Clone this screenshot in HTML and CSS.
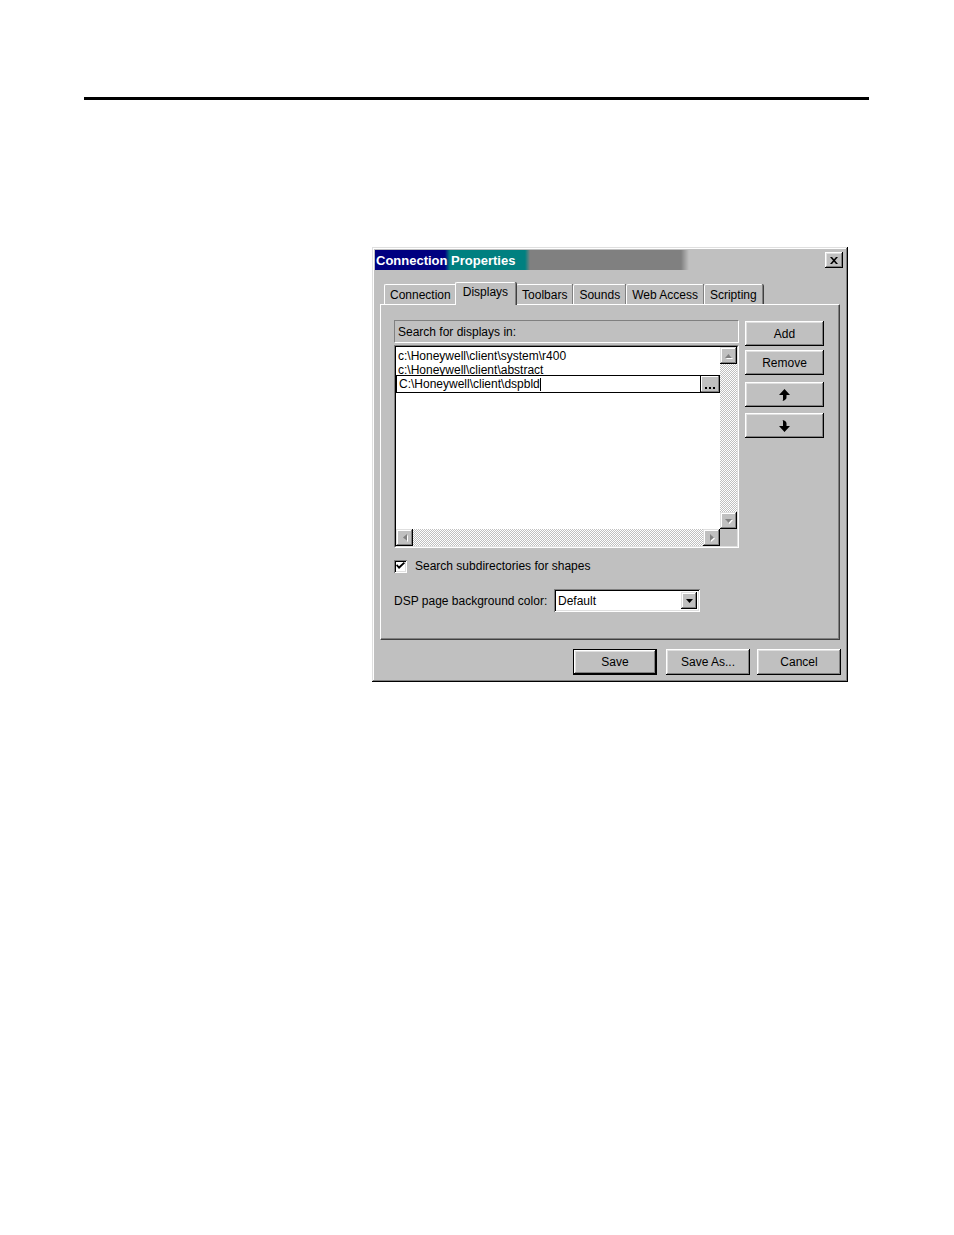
FILE: index.html
```html
<!DOCTYPE html>
<html>
<head>
<meta charset="utf-8">
<link rel="stylesheet" href="styles.css">
</head>
<body>
<div class="rule"></div>
<div class="dialog">
  <div class="titlebar">
    <span class="title">Connection Properties</span>
    <button class="close"><svg width="8" height="7" viewBox="0 0 8 7"><path d="M0 0h2l2 2.3L6 0h2L5 3.5 8 7H6L4 4.7 2 7H0l3-3.5z" fill="#000"/></svg></button>
  </div>
  <div class="tabs">
    <div class="tab">Connection</div>
    <div class="tab active">Displays</div>
    <div class="tab">Toolbars</div>
    <div class="tab">Sounds</div>
    <div class="tab">Web Access</div>
    <div class="tab">Scripting</div>
  </div>
  <div class="panel">
    <div class="dirs">
      <div class="listcol">
        <div class="listhead">Search for displays in:</div>
        <div class="listbox">
          <div class="listinner">
            <div class="listmain">
              <div class="items">
                <div class="item">c:\Honeywell\client\system\r400</div>
                <div class="item">c:\Honeywell\client\abstract</div>
                <div class="edit">
                  <span class="edittext">C:\Honeywell\client\dspbld<span class="caret"></span></span>
                  <button class="browse"><svg width="11" height="3" viewBox="0 0 11 3"><rect x="0" y="0" width="2" height="2" fill="#000"/><rect x="4" y="0" width="2" height="2" fill="#000"/><rect x="8" y="0" width="2" height="2" fill="#000"/></svg></button>
                </div>
              </div>
              <div class="vscroll">
                <div class="sbtn"><svg width="7" height="4" viewBox="0 0 7 4"><path d="M3.5 0L7 4H0z" fill="#808080"/></svg></div>
                <div class="track"></div>
                <div class="sbtn"><svg width="7" height="4" viewBox="0 0 7 4"><path d="M0 0h7L3.5 4z" fill="#808080"/></svg></div>
              </div>
            </div>
            <div class="hrow">
              <div class="hscroll">
                <div class="sbtn"><svg width="4" height="7" viewBox="0 0 4 7"><path d="M0 3.5L4 0v7z" fill="#808080"/></svg></div>
                <div class="track"></div>
                <div class="sbtn"><svg width="4" height="7" viewBox="0 0 4 7"><path d="M0 0l4 3.5L0 7z" fill="#808080"/></svg></div>
              </div>
              <div class="corner"></div>
            </div>
          </div>
        </div>
      </div>
      <div class="sidebtns">
        <button class="btn add">Add</button>
        <button class="btn remove">Remove</button>
        <button class="btn up"><svg width="11" height="12" viewBox="0 0 11 12"><path d="M5.5 0L11 6H7.5V8.5C7.5 10.2 6 11.3 3.5 12 4.3 10.8 4 9.8 4 8.5V6H0z" fill="#000"/></svg></button>
        <button class="btn down"><svg width="11" height="12" viewBox="0 0 11 12"><path d="M5.5 12L11 6H7.5V3.5C7.5 1.8 6 0.7 3.5 0 4.3 1.2 4 2.2 4 3.5V6H0z" fill="#000"/></svg></button>
      </div>
    </div>
    <div class="check">
      <span class="checkbox"><svg width="9" height="8" viewBox="0 0 9 8"><path d="M0 3.5l1.2-1.2L3 4.2 7.8 0 9 1.2 3 7z" fill="#000"/></svg></span>
      <span class="checklabel">Search subdirectories for shapes</span>
    </div>
    <div class="colorrow">
      <span class="colorlabel">DSP page background color:</span>
      <div class="combo">
        <span class="combotext">Default</span>
        <span class="dropbtn"><svg width="7" height="4" viewBox="0 0 7 4"><path d="M0 0h7L3.5 4z" fill="#000"/></svg></span>
      </div>
    </div>
  </div>
  <div class="footer">
    <button class="btn fbtn default">Save</button>
    <button class="btn fbtn saveas">Save As...</button>
    <button class="btn fbtn cancel">Cancel</button>
  </div>
</div>
</body>
</html>
```

FILE: styles.css
```css
html, body {
  margin: 0;
  padding: 0;
  background: #fff;
}

body {
  font-family: "Liberation Sans", Arial, sans-serif;
  font-size: 12px;
  color: #000;
}

.rule {
  margin: 97px 0 0 84px;
  width: 785px;
  height: 3px;
  background: #000;
}

.dialog {
  margin: 147px 0 0 372px;
  width: 476px;
  height: 435px;
  box-sizing: border-box;
  padding: 3px;
  background: #c0c0c0;
  box-shadow: inset -1px -1px #000, inset 1px 1px #dfdfdf, inset -2px -2px #808080, inset 2px 2px #fff;
  display: flex;
  flex-direction: column;
}

.titlebar {
  height: 20px;
  display: flex;
  align-items: center;
  justify-content: space-between;
  background: linear-gradient(to right, #000080 0, #000080 70px, #005080 73px, #008080 75px, #008080 150px, #808080 155px, #808080 306px, #a0a0a0 310px, #c0c0c0 314px);
}

.title {
  color: #fff;
  font-weight: bold;
  font-size: 13px;
  padding-left: 1px;
  white-space: nowrap;
}

.close {
  width: 18px;
  height: 16px;
  margin-right: 2px;
  padding: 0;
  border: none;
  background: #c0c0c0;
  box-shadow: inset -1px -1px #000, inset 1px 1px #fff, inset -2px -2px #808080, inset 2px 2px #dfdfdf;
  display: flex;
  align-items: center;
  justify-content: center;
}

.tabs {
  margin-top: 12px;
  height: 22px;
  padding-left: 9px;
  display: flex;
  align-items: flex-end;
  position: relative;
  z-index: 2;
}

.tab {
  height: 19px;
  line-height: 21px;
  padding: 0 5px;
  border-top: 1px solid #fff;
  border-left: 1px solid #fff;
  border-right: 1px solid #808080;
  border-top-left-radius: 2px;
  border-top-right-radius: 2px;
  box-shadow: 1px 0 0 #404040;
  background: #c0c0c0;
  white-space: nowrap;
}

.tab.active {
  height: 22px;
  line-height: 19px;
  margin: 0 -1px -1px -2px;
  padding: 0 7px 0 7px;
  position: relative;
  z-index: 3;
}

.tab.active + .tab {
  margin-left: 1px;
}

.panel {
  margin: 0 5px 0 5px;
  height: 336px;
  box-sizing: border-box;
  border-top: 1px solid #fff;
  border-left: 1px solid #fff;
  border-right: 1px solid #404040;
  border-bottom: 1px solid #404040;
  box-shadow: inset -1px -1px #808080;
  padding: 15px 0 0 13px;
}

.dirs {
  display: flex;
  gap: 6px;
}

.listcol {
  width: 345px;
  display: flex;
  flex-direction: column;
}

.listhead {
  height: 23px;
  box-sizing: border-box;
  border-top: 1px solid #808080;
  border-left: 1px solid #808080;
  border-right: 1px solid #fff;
  border-bottom: 1px solid #fff;
  padding: 2px 0 0 3px;
  line-height: 19px;
}

.listbox {
  margin-top: 2px;
  height: 203px;
  box-sizing: border-box;
  border-top: 1px solid #808080;
  border-left: 1px solid #808080;
  border-right: 1px solid #fff;
  border-bottom: 1px solid #fff;
}

.listinner {
  height: 100%;
  box-sizing: border-box;
  border-top: 1px solid #000;
  border-left: 1px solid #000;
  border-right: 1px solid #dfdfdf;
  border-bottom: 1px solid #dfdfdf;
  display: flex;
  flex-direction: column;
  background: #fff;
}

.listmain {
  display: flex;
  height: 182px;
}

.items {
  width: 324px;
  padding-top: 1px;
  background: #fff;
}

.item {
  height: 14px;
  line-height: 16px;
  padding-left: 2px;
  white-space: nowrap;
}

.edit {
  margin-top: -1px;
  height: 18px;
  box-sizing: border-box;
  border: 1px solid #000;
  background: #fff;
  display: flex;
  align-items: center;
  justify-content: space-between;
  position: relative;
}

.edittext {
  padding-left: 2px;
  line-height: 15px;
  display: flex;
  align-items: center;
  white-space: nowrap;
}

.caret {
  display: inline-block;
  width: 1px;
  height: 13px;
  background: #000;
}

.browse {
  width: 19px;
  height: 16px;
  padding: 0 0 2px 0;
  border: none;
  border-left: 1px solid #000;
  background: #c0c0c0;
  box-shadow: inset -1px -1px #808080, inset 1px 1px #fff;
  display: flex;
  align-items: flex-end;
  justify-content: center;
}

.vscroll {
  width: 17px;
  display: flex;
  flex-direction: column;
}

.track {
  flex: 1;
  background: repeating-conic-gradient(#c0c0c0 0 25%, #fff 0 50%) 0 0 / 2px 2px;
}

.sbtn {
  width: 17px;
  height: 17px;
  box-sizing: border-box;
  background: #c0c0c0;
  box-shadow: inset -1px -1px #000, inset 1px 1px #dfdfdf, inset -2px -2px #808080, inset 2px 2px #fff;
  display: flex;
  align-items: center;
  justify-content: center;
  flex-shrink: 0;
}

.sbtn svg {
  filter: drop-shadow(1px 1px 0 #fff);
}

.hrow {
  display: flex;
  height: 17px;
}

.hscroll {
  width: 324px;
  display: flex;
}

.corner {
  width: 17px;
  background: #c0c0c0;
}

.sidebtns {
  display: flex;
  flex-direction: column;
}

.btn {
  width: 79px;
  height: 25px;
  padding: 0;
  border: none;
  background: #c0c0c0;
  box-shadow: inset -1px -1px #000, inset 1px 1px #fff, inset -2px -2px #808080, inset 2px 2px #dfdfdf;
  font-family: "Liberation Sans", Arial, sans-serif;
  font-size: 12px;
  color: #000;
  display: flex;
  align-items: center;
  justify-content: center;
}

.add { margin-top: 1px; }
.remove { margin-top: 4px; }
.up { margin-top: 7px; }
.down { margin-top: 6px; }

.check {
  margin-top: 11px;
  display: flex;
  align-items: center;
  height: 14px;
}

.checkbox {
  width: 13px;
  height: 13px;
  box-sizing: border-box;
  background: #fff;
  box-shadow: inset 1px 1px #808080, inset -1px -1px #fff, inset 2px 2px #000, inset -2px -2px #dfdfdf;
  display: flex;
  align-items: center;
  justify-content: center;
}

.checklabel {
  margin-left: 8px;
}

.colorrow {
  margin-top: 16px;
  display: flex;
  align-items: center;
}

.colorlabel {
  white-space: nowrap;
  width: 160px;
}

.combo {
  width: 146px;
  height: 23px;
  box-sizing: border-box;
  background: #fff;
  box-shadow: inset 1px 1px #808080, inset -1px -1px #fff, inset 2px 2px #000, inset -2px -2px #dfdfdf;
  display: flex;
  align-items: center;
  justify-content: space-between;
  padding: 2px;
}

.combotext {
  padding-left: 2px;
}

.dropbtn {
  width: 16px;
  height: 17px;
  box-sizing: border-box;
  margin-right: 1px;
  background: #c0c0c0;
  box-shadow: inset -1px -1px #000, inset 1px 1px #dfdfdf, inset -2px -2px #808080, inset 2px 2px #fff;
  display: flex;
  align-items: center;
  justify-content: center;
}

.footer {
  margin-top: 9px;
  padding-right: 4px;
  display: flex;
  justify-content: flex-end;
}

.fbtn {
  width: 84px;
  height: 26px;
}

.default {
  box-shadow: inset 0 0 0 1px #000, inset -2px -2px #000, inset 2px 2px #fff, inset -3px -3px #808080, inset 3px 3px #dfdfdf;
}

.saveas { margin-left: 9px; }
.cancel { margin-left: 7px; }
```
